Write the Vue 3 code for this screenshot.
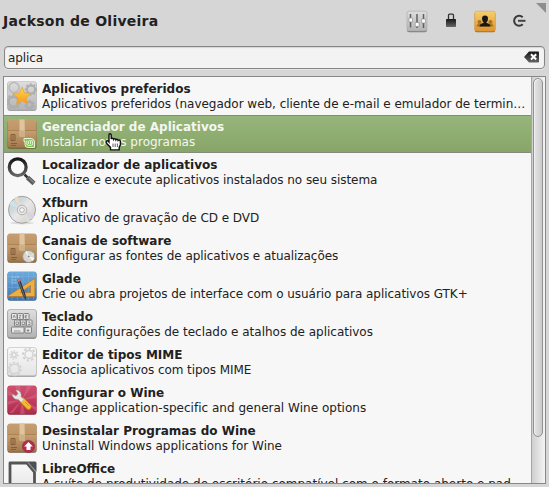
<script setup>
import { ref } from 'vue'

const query = ref('aplica')
const items = [
  { icon: 'star', title: 'Aplicativos preferidos', text: 'Aplicativos preferidos (navegador web, cliente de e-mail e emulador de termin…', spacing: -0.03 },
  { icon: 'mint', title: 'Gerenciador de Aplicativos', text: 'Instalar novos programas', active: true, spacing: 0 },
  { icon: 'search', title: 'Localizador de aplicativos', text: 'Localize e execute aplicativos instalados no seu sistema', spacing: -0.055 },
  { icon: 'disc', title: 'Xfburn', text: 'Aplicativo de gravação de CD e DVD', spacing: -0.055 },
  { icon: 'boxdisc', title: 'Canais de software', text: 'Configurar as fontes de aplicativos e atualizações', spacing: -0.055 },
  { icon: 'glade', title: 'Glade', text: 'Crie ou abra projetos de interface com o usuário para aplicativos GTK+', spacing: -0.04 },
  { icon: 'keyboard', title: 'Teclado', text: 'Edite configurações de teclado e atalhos de aplicativos', spacing: -0.01 },
  { icon: 'mime', title: 'Editor de tipos MIME', text: 'Associa aplicativos com tipos MIME', spacing: -0.07 },
  { icon: 'wine', title: 'Configurar o Wine', text: 'Change application-specific and general Wine options', spacing: 0.02 },
  { icon: 'boxup', title: 'Desinstalar Programas do Wine', text: 'Uninstall Windows applications for Wine', spacing: 0 },
  { icon: 'libre', title: 'LibreOffice', text: 'A suíte de produtividade de escritório compatível com o formato aberto e pad…', spacing: 0 }
]
const boxes = ['mint', 'boxdisc', 'boxup']
const keys = [
  [4.5, 4.5, 5.5], [10.5, 4.5, 5.5], [16.5, 4.5, 5.5],
  [7.5, 11, 5.5], [13.5, 11, 5.5], [19.5, 11, 5.5],
  [4.5, 18, 12.5], [18, 18, 6.5]
]
</script>

<template>
  <div class="menu">
    <svg class="defs" width="0" height="0" aria-hidden="true">
      <defs>
        <linearGradient id="g-grey" x2="0" y2="1"><stop stop-color="#dedede" /><stop offset="1" stop-color="#b4b4b4" /></linearGradient>
        <linearGradient id="g-light" x2="0" y2="1"><stop stop-color="#f8f8f8" /><stop offset="1" stop-color="#e4e4e4" /></linearGradient>
        <linearGradient id="g-box" x2="0" y2="1"><stop stop-color="#c8a478" /><stop offset=".38" stop-color="#b98f60" /><stop offset=".4" stop-color="#c69e70" /><stop offset="1" stop-color="#a1784c" /></linearGradient>
        <linearGradient id="g-blue" x2="0" y2="1"><stop stop-color="#6da9dd" /><stop offset="1" stop-color="#3e7ab4" /></linearGradient>
        <linearGradient id="g-red" x2="0" y2="1"><stop stop-color="#d0506e" /><stop offset="1" stop-color="#b02c4e" /></linearGradient>
        <linearGradient id="g-star" x2="0" y2="1"><stop stop-color="#ffd84a" /><stop offset="1" stop-color="#f59a1a" /></linearGradient>
        <linearGradient id="g-dark" x2="0" y2="1"><stop stop-color="#161616" /><stop offset="1" stop-color="#666" /></linearGradient>
        <linearGradient id="g-disc" x2="1" y2="1"><stop stop-color="#d8d8d8" /><stop offset=".3" stop-color="#d0d6d9" /><stop offset=".5" stop-color="#e8e8e8" /><stop offset=".75" stop-color="#ddd8d6" /><stop offset="1" stop-color="#d0d0d0" /></linearGradient>
        <linearGradient id="g-users" x2="0" y2="1"><stop stop-color="#f5d070" /><stop offset="1" stop-color="#e2932c" /></linearGradient>
      </defs>
    </svg>

    <header class="top">
      <h1>Jackson de Oliveira</h1>
      <nav class="actions">
        <svg class="tile" width="22" height="24" viewBox="0 0 22 24">
          <rect x="1" y="2" width="20" height="20.2" rx="2.2" fill="#7b7b7b" />
          <rect x="1" y="1.2" width="20" height="19.8" rx="2" fill="url(#g-grey)" stroke="#aaa" stroke-width=".6" />
          <path d="M4.5 4v13.500M11 4v14M17.500 4v14" stroke="#606060" stroke-width="1.500" />
          <path d="M3 8h3.500v4H3zM9.300 12.500h3.700v4H9.300zM15.700 9h3.700v4h-3.700z" fill="#fff" stroke="#888" stroke-width=".6" />
        </svg>
        <svg class="lock" width="12" height="16" viewBox="0 0 12 16">
          <path d="M3.500 7V2.200q0-1 1-1h3q1 0 1 1V7" fill="none" stroke="#333" stroke-width="1.300" />
          <rect x="1" y="6" width="10" height="8" rx=".7" fill="url(#g-dark)" />
        </svg>
        <svg class="users" width="22" height="24" viewBox="0 0 22 24">
          <rect x=".700" y="2" width="20.600" height="20.200" rx="2.200" fill="#a36b24" />
          <rect x=".700" y="1.200" width="20.600" height="19.800" rx="2" fill="url(#g-users)" stroke="#d9a548" stroke-width=".6" />
          <g fill="#a27427"><circle cx="5.500" cy="12" r="2" /><circle cx="16.500" cy="12" r="2" /><path d="M2.500 16.500q0-2.500 3-2.800h11q3 .300 3 2.800z" /></g>
          <path d="M8 8.500q0-3 3-3t3 3q0 2.500-1.500 3.800v.700q3.800.700 4 3.500h-11q.200-2.800 4-3.500v-.700Q8 11 8 8.500z" fill="#191714" />
        </svg>
        <svg class="logout" width="15" height="14" viewBox="0 0 15 14">
          <path d="M10.700 3.300A5 5 0 1 0 10.700 10.300" fill="none" stroke="#3a3a3a" stroke-width="2" />
          <path d="M6 6.800h7.500" stroke="#444" stroke-width="2" />
        </svg>
      </nav>
      <i class="grip"></i>
    </header>

    <label class="search">
      <input v-model="query" type="text" spellcheck="false" />
      <svg width="16" height="12" viewBox="0 0 16 12">
        <path d="M0 6L5 .500h9.200q.800 0 .800.800v9.400q0 .800-.800.800H5z" fill="url(#g-dark)" />
        <path d="M7 3.300l5.200 5.200M12.200 3.300L7 8.500" stroke="#fff" stroke-width="2" />
      </svg>
    </label>

    <section class="panel">
      <ul class="results">
        <li v-for="item in items" :key="item.title" :class="{ active: item.active }">
          <svg class="icon" width="30" height="30" viewBox="0 0 30 30">
            <template v-if="item.icon === 'star'">
              <rect x=".500" y="1" width="29" height="28.700" rx="2.500" fill="#858585" />
              <rect x=".500" y=".500" width="29" height="28.200" rx="2.500" fill="url(#g-grey)" stroke="#bbb" stroke-width=".6" />
              <g fill="none" stroke="#adadad">
                <circle cx="7" cy="6.500" r="5" stroke="#b8b8b8" stroke-width="1.500" />
                <circle cx="6.500" cy="21" r="5" stroke-width="2.500" /><circle cx="6.500" cy="21" r="7" stroke-width="1.700" stroke-dasharray="2.500 2" />
                <circle cx="24" cy="8.500" r="4" stroke-width="2" /><circle cx="24" cy="8.500" r="5.500" stroke-width="1.500" stroke-dasharray="2 2" />
                <circle cx="22.500" cy="24" r="3" stroke-width="2" /><circle cx="22.500" cy="24" r="4.500" stroke-width="1.500" stroke-dasharray="2 2" />
              </g>
              <path d="M15 6.200l2.600 5.700 6.200.700-4.600 4.200 1.300 6.100-5.500-3.100-5.500 3.100 1.300-6.100-4.600-4.200 6.200-.700z" fill="url(#g-star)" stroke="#eda13a" stroke-width=".8" />
            </template>

            <template v-else-if="boxes.includes(item.icon)">
              <rect x=".500" y="1" width="29" height="28.700" rx="2.500" fill="#745438" />
              <rect x=".500" y=".500" width="29" height="28.200" rx="2.500" fill="url(#g-box)" />
              <path d="M1 11.300L2.500 1h25L29 11.300z" fill="#c39a6a" opacity=".6" />
              <path d="M1 11.500h28" stroke="#a77d50" stroke-width=".8" />
              <path d="M12.500.500h5l.500 17h-5.500z" fill="#dec59f" />
              <path d="M13 11.500h5v6h-5z" fill="#cdb087" />
              <path d="M4 15.500h4v6H4zM6 16v5.500M4 24.500h6M4 26.500h5" stroke="#7f5b38" stroke-width=".9" fill="none" />
              <template v-if="item.icon === 'mint'">
                <path d="M17 19.500h7q3.500 0 3.500 3.500v5.500H21q-3 0-3-3v-3h-1z" fill="#7cc750" stroke="#e3f4d7" stroke-width="1" />
                <path d="M19.800 21.500v3.300q0 1.500 1.500 1.500h3q1.300 0 1.300-1.500v-2.200q0-1-1-1t-1 1V25M23.600 22.600q0-1-1-1t-1 1V25" fill="none" stroke="#fff" stroke-width=".8" />
              </template>
              <template v-else-if="item.icon === 'boxdisc'">
                <circle cx="21.700" cy="23.500" r="6" fill="#d5d5d1" stroke="#9b9288" stroke-width=".7" />
                <path d="M21.700 23.500L18 19l2-1.200zM21.700 23.500l4 4.500 1.800-3z" fill="#f8f8f8" />
                <path d="M21.700 23.500l5.500-1.500-.700-2z" fill="#d7ebc6" />
                <circle cx="21.700" cy="23.500" r="1.500" fill="#9b8b7c" stroke="#fff" stroke-width=".8" />
              </template>
              <template v-else>
                <circle cx="21.500" cy="23.500" r="6.100" fill="#b92a50" stroke="#8e2542" stroke-width=".6" />
                <path d="M21.500 19l4.300 4.600h-2.300V27h-4v-3.400h-2.300z" fill="#fff" />
              </template>
            </template>

            <template v-else-if="item.icon === 'search'">
              <path d="M17.500 17.500l3 3" stroke="#333" stroke-width="2.500" />
              <path d="M20.500 20.500l6.500 6" stroke="#5c5c5c" stroke-width="4.500" />
              <path d="M22 21l5 4.700" stroke="#858585" stroke-width="1.300" />
              <circle cx="10.700" cy="10.200" r="8.400" fill="#fafafa" stroke="url(#g-dark)" stroke-width="3.300" />
            </template>

            <template v-else-if="item.icon === 'disc'">
              <ellipse cx="15" cy="28" rx="12" ry="1.500" fill="#ddd" />
              <circle cx="15" cy="14.800" r="13.500" fill="url(#g-disc)" stroke="#989898" stroke-width=".9" />
              <path d="M15 15L2.500 9.500 5 5.500z" fill="#cde4ea" /><path d="M15 15L7 3.500l3.500-2z" fill="#e8ddc4" />
              <path d="M15 15l12.500 5-2.500 4.500z" fill="#ded0e4" /><path d="M15 15l8.500 11-3.500 1.500z" fill="#d6e4cd" />
              <circle cx="15" cy="15" r="4.800" fill="#e8e8e8" stroke="#a5a5a5" stroke-width=".8" />
              <circle cx="15" cy="15" r="2.300" fill="#fafafa" stroke="#a0a0a0" stroke-width=".8" />
            </template>

            <template v-else-if="item.icon === 'glade'">
              <rect x=".500" y="1" width="29" height="28.700" rx="2.500" fill="#426689" />
              <rect x=".500" y=".500" width="29" height="28.200" rx="2.500" fill="url(#g-blue)" />
              <path d="M1 5.500h28M1 11h28M1 16.500h28M5 1v28M10.500 1v28M16 1v28M21.500 1v28M26.500 1v28" stroke="#8dbce4" stroke-width=".6" opacity=".55" />
              <path d="M4.500 6h8M4.500 9h6M4.500 12h5" stroke="#b7d8f0" stroke-width=".8" stroke-dasharray="2 1" />
              <path fill-rule="evenodd" d="M0 25.500L27.800 7.500v18zM13.500 21.500h10v-7z" fill="#efaf40" stroke="#b96e1e" stroke-width=".6" />
              <path d="M10 8.500l2.700-1 6 16.500.300 5-3-4z" fill="#30343a" />
              <path d="M11.500 9.500l6 16" stroke="#858585" stroke-width=".8" />
              <path d="M10 8.500l2.700-1 1 2.500-2.700 1z" fill="#dc7264" />
            </template>

            <template v-else-if="item.icon === 'keyboard'">
              <rect x=".500" y="1" width="29" height="28.700" rx="2.500" fill="#707070" />
              <rect x=".500" y=".500" width="29" height="28.200" rx="2.500" fill="url(#g-grey)" stroke="#999" stroke-width=".6" />
              <rect v-for="(k, i) in keys" :key="i" :x="k[0]" :y="k[1]" :width="k[2]" height="6" rx=".8" fill="#e7e7e7" stroke="#777" stroke-width=".9" />
              <path d="M6 9l1.200-3 1.200 3M12 6.300h2L12 9h2M20.200 6.300h-2V9h2M18.200 7.700h1.500M9 13h2.500v2.500H9zM15 13h2.500v2.500H15zM21 13h2v2.500h-2M7 22h6.500M21 20v3M19.700 21.500h2.800" fill="none" stroke="#707070" stroke-width=".7" />
            </template>

            <template v-else-if="item.icon === 'mime'">
              <rect x=".500" y="1" width="29" height="28.700" rx="2.500" fill="#8e8e8e" />
              <rect x=".500" y=".500" width="29" height="28.200" rx="2.500" fill="url(#g-light)" stroke="#bbb" stroke-width=".6" />
              <g fill="none" stroke="#d2d2d2">
                <circle cx="7.500" cy="22" r="4.800" stroke-width="1.500" /><circle cx="7.500" cy="22" r="6.500" stroke-width="1.500" stroke-dasharray="2.500 1.500" />
                <circle cx="22" cy="7.500" r="4" stroke-width="1.500" /><circle cx="22" cy="7.500" r="6" stroke-width="2" stroke-dasharray="2.500 2" />
                <circle cx="7" cy="8" r="2.200" stroke-width="1.500" /><circle cx="7" cy="8" r="4" stroke-width="1.500" stroke-dasharray="1.500 1.500" />
              </g>
            </template>

            <template v-else-if="item.icon === 'wine'">
              <rect x=".500" y="1" width="29" height="28.700" rx="2.500" fill="#85243d" />
              <rect x=".500" y=".500" width="29" height="28.200" rx="2.500" fill="url(#g-red)" />
              <path d="M15 15L1 5v5zM15 15L8 1h5zM15 15L20 1h5zM15 15l14-6v4zM15 15l14 7v4zM15 15l3 14h-5zM15 15L6 28H2zM15 15L1 20v-4z" fill="#df7991" opacity=".4" />
              <path d="M15.500 15.500l6 6.500" stroke="#cc7a20" stroke-width="6" stroke-linecap="round" />
              <path d="M15.500 15.300l6 6.200" stroke="#f7ba35" stroke-width="4.600" stroke-linecap="round" />
              <path d="M5.300 9l.500 2.500q1.500 3.500 5.500 3l3 2.800 2.600-2.600-2.800-3q.800-5-4.100-6.700l-1.200.200 2.200 3.300-2 2.500z" fill="#e9e9e6" stroke="#999" stroke-width=".5" />
              <path d="M18 17l4 4" stroke="#df9127" stroke-width="1" />
            </template>

            <template v-else>
              <path d="M3 2h17l7.500 9v21H3z" fill="url(#g-light)" stroke="#555" stroke-width="2.800" stroke-linejoin="round" />
              <path d="M20.500.500H28q1.500 0 1.500 1.500v8.700z" fill="#4c5151" />
              <path d="M21 1.700l7.700 9" stroke="#a0a0a0" stroke-width=".8" />
            </template>
          </svg>
          <div class="copy">
            <strong>{{ item.title }}</strong>
            <span :style="{ letterSpacing: item.spacing + 'px' }">{{ item.text }}</span>
          </div>
        </li>
      </ul>
      <div class="track"><div class="thumb"></div></div>
    </section>

    <svg class="pointer" width="18" height="18" viewBox="0 0 18 18">
      <path d="M4 1.800Q4 .800 5 .800t1.200 1V6q.300-.700 1.200-.700 1 0 1.200 1 .300-.600 1.100-.600 1 0 1.200 1.100.300-.500 1-.500 1 0 1.200 1.100.300-.400.900-.400 1.200 0 1.400 1.400v3.500l-1.200 2.200v2.800H5.500v-2.500L2 10.700Q.600 8.500 1.600 8q1-.700 2.400 1z" fill="#fff" stroke="#111" stroke-width="1.400" />
      <path d="M8 10.500v3.500M10.200 10.500v3.500M12.400 10.500v3.500" stroke="#333" stroke-width=".8" />
    </svg>
  </div>
</template>

<style>
body { background: #d6d6d6; }
</style>

<style scoped>
.menu { position: relative; box-sizing: border-box; width: 549px; height: 487px; overflow: hidden; padding: 0 3px; background: #d6d6d6; color: #212121; font: 12px/15px "DejaVu Sans", sans-serif; }
.defs { position: absolute; }
.top { display: flex; height: 46px; justify-content: space-between; align-items: flex-start; }
h1 { margin: 12px 0 0; font-size: 14px; line-height: 18px; font-weight: 700; letter-spacing: .25px; }
.actions { display: flex; align-items: flex-start; margin: 10px 19px 0 0; }
.lock { margin: 3px 0 0 17px; }
.users { margin-left: 17px; }
.logout { margin: 4px 0 0 16px; }
.grip { position: absolute; top: 3px; right: 3px; width: 10px; height: 10px; background: #8e8e8e; clip-path: polygon(0 0, 100% 0, 100% 100%); }
.search { display: flex; box-sizing: border-box; width: 541px; height: 23px; margin-left: 1px; align-items: center; padding: 0 4px 0 3px; border: 1px solid #858585; border-radius: 4px; background: #f3f3f3; box-shadow: 0 1px 0 #e6e6e6, inset 0 1px 1px #d4d4d4; }
.search input { flex: 1; min-width: 0; padding: 1px 0 0; border: 0; outline: 0; background: transparent; color: #212121; font: 12px/15px "DejaVu Sans", sans-serif; letter-spacing: -.08px; }
.search svg { margin-bottom: 1px; }
.panel { display: flex; box-sizing: border-box; width: 543px; height: 408px; margin-top: 7px; overflow: hidden; border: 1px solid #888; background: #f7f7f7; }
.results { flex: 1; min-width: 0; margin: 0; padding: 0; list-style: none; }
li { display: flex; box-sizing: border-box; height: 38px; padding: 4px 3px 0 3px; gap: 5px; }
.active { background: linear-gradient(#97b67c, #87a567); box-shadow: inset 0 1px #858b80, inset 0 -1px #858b80; color: #f4f7f0; }
.icon { flex: none; }
.copy { display: flex; flex: 1; min-width: 0; flex-direction: column; padding-top: 1px; }
strong, .copy span { white-space: nowrap; }
.track { box-sizing: border-box; width: 14px; padding: 1px 2px 0 1px; border-left: 1px solid #a6a6a6; background: linear-gradient(90deg, #cfcfcf, #f4f4f4); }
.thumb { box-sizing: border-box; height: 359px; width: 10px; border: 1px solid #929292; border-radius: 5px; background: linear-gradient(90deg, #e6e6e6, #cbcbcb); box-shadow: inset 1px 1px #efefef; }
.pointer { position: absolute; left: 105px; top: 133px; }
</style>
